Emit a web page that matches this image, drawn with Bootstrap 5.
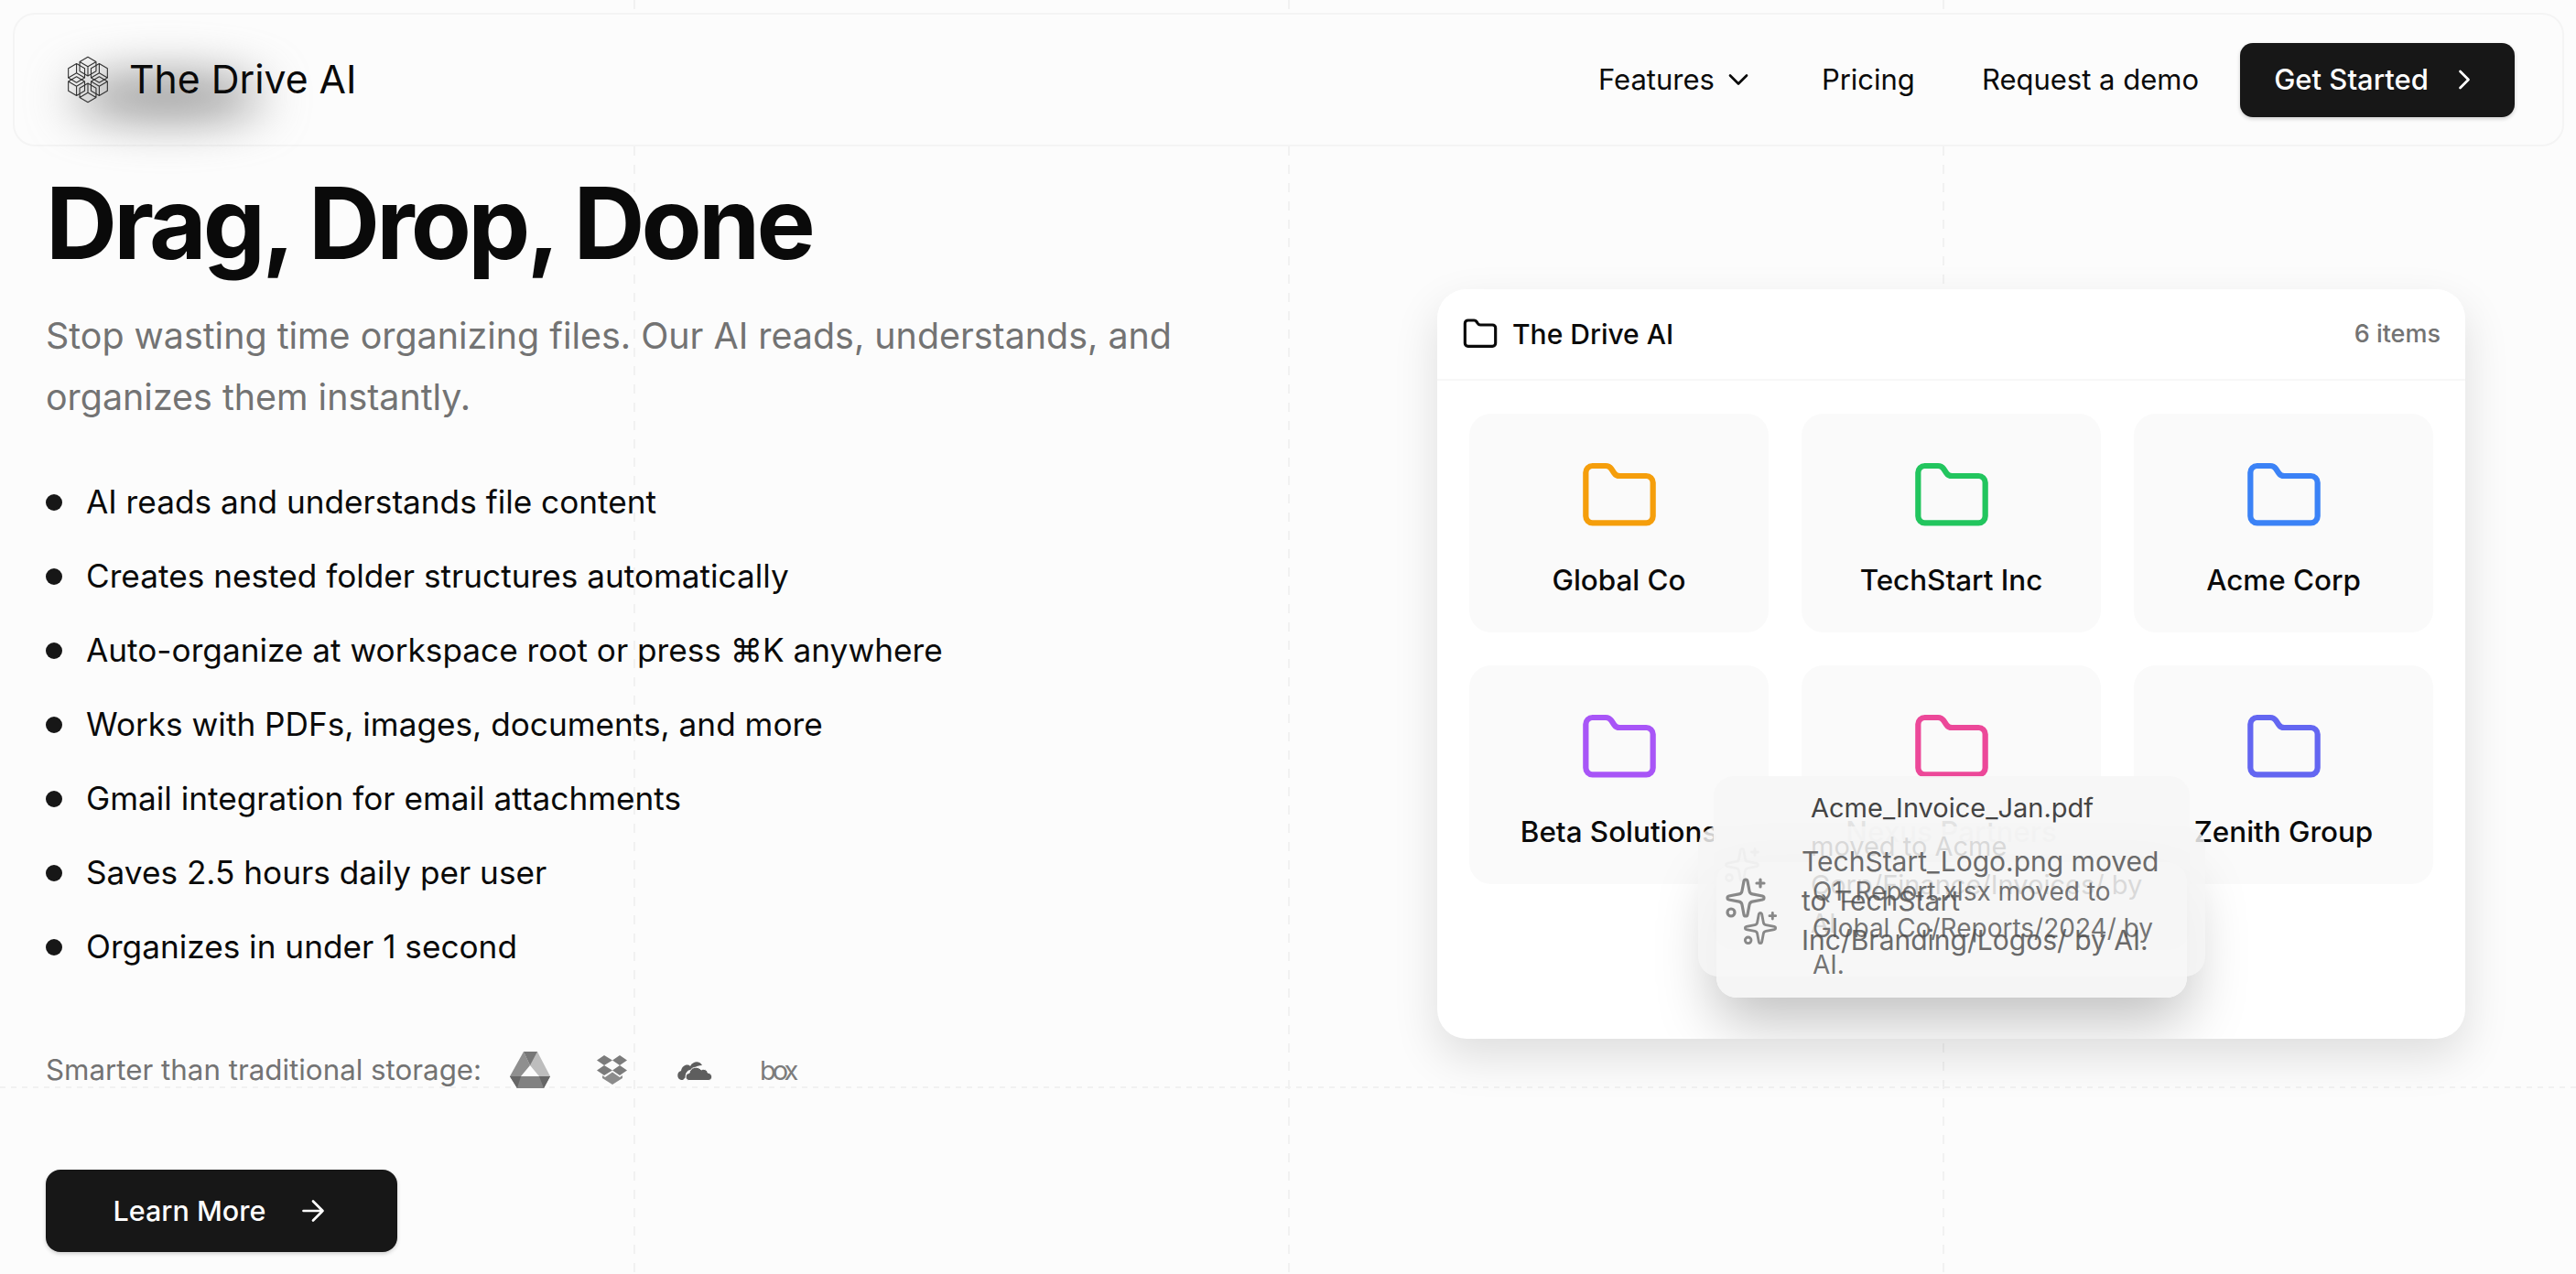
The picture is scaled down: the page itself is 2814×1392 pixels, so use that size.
<!DOCTYPE html>
<html lang="en">
<head>
  <meta charset="UTF-8" />
  <meta name="viewport" content="width=device-width, initial-scale=1.0"/>
  <title>The Drive AI</title>
  <link href="https://cdn.jsdelivr.net/npm/bootstrap@5.3.3/dist/css/bootstrap.min.css" rel="stylesheet">
  <style>
    html, body { height: 100%; }
    body {
      font-family: "Inter", "Liberation Sans", sans-serif;
      color: #0a0a0a;
      overflow: hidden;
      background-color: #fcfcfc;
      background-image:
        repeating-linear-gradient(to bottom, #f1f1f1 0 10px, transparent 10px 20px),
        repeating-linear-gradient(to bottom, #f1f1f1 0 10px, transparent 10px 20px),
        repeating-linear-gradient(to bottom, #f1f1f1 0 10px, transparent 10px 20px),
        repeating-linear-gradient(to right, #f1f1f1 0 6px, transparent 6px 12px);
      background-size: 2px 100%, 2px 100%, 2px 100%, 100% 2px;
      background-position: 692px 0, 1407px 0, 2122px 0, 0 1187px;
      background-repeat: no-repeat;
    }

    .top-bar {
      margin: 14px 13px 0 14px;
      height: 146px;
      padding: 0 52px 0 52px;
      background: #fcfcfc;
      border: 2px solid #f4f4f4;
      border-radius: 24px;
      position: relative;
    }
    .brand-blob {
      position: absolute;
      left: 62px;
      top: 68px;
      width: 210px;
      height: 44px;
      background: #8a8a8a;
      border-radius: 50%;
      filter: blur(26px);
    }
    .brand-link { position: relative; font-size: 42.7px; color: #0a0a0a; gap: 17px; padding: 0; margin: 0; }
    .brand-link:hover { color: #0a0a0a; }
    .top-link { font-size: 31px; color: #0a0a0a !important; padding: 0 !important; margin-right: 73px; }
    .top-link.last-link { margin-right: 45px; }
    .dark-btn {
      background: #171717;
      color: #fff;
      border: 0;
      font-weight: 500;
      box-shadow: 0 2px 4px rgba(0,0,0,.18);
    }
    .dark-btn:hover { background: #171717; color: #fff; }
    .start-btn { width: 300px; height: 81px; font-size: 31px; border-radius: 14px; gap: 21px; }
    .learn-btn { width: 384px; height: 90px; font-size: 30.5px; border-radius: 16px; gap: 34px; }

    .hero-left { padding: 19px 0 0 50px; }
    .hero-title { font-size: 108px; font-weight: 700; letter-spacing: -.035em; line-height: 130px; margin: 0 0 25px; color: #0a0a0a; }
    .hero-sub { font-size: 39.4px; line-height: 67px; color: #737373; margin: 0 0 40px; }
    .point-list { font-size: 35.2px; margin: 0 0 69px; }
    .point-list li { height: 81px; gap: 26px; color: #0a0a0a; }
    .point-dot { width: 18px; height: 18px; border-radius: 50%; background: #171717; flex: none; }
    .store-row { font-size: 31.3px; color: #737373; height: 50px; margin-bottom: 84px; }
    .store-icon { width: 90px; flex: none; }
    .box-word { font-size: 29px; letter-spacing: -4px; color: #7c7c7c; width: 90px; line-height: 1; }

    .drive-card {
      position: relative;
      width: 1123px;
      height: 819px;
      margin: 156px 0 0 163px;
      border: 0;
      border-radius: 32px;
      box-shadow: 0 20px 50px rgba(0,0,0,.12);
    }
    .drive-head { height: 100px; padding: 0 27px; background: #fff; border-bottom: 2px solid #f7f7f7; border-radius: 32px 32px 0 0 !important; }
    .drive-head-title { font-size: 30px; font-weight: 500; gap: 15px; }
    .drive-count { font-size: 27px; color: #737373; font-weight: 500; }
    .tile-grid { display: grid; grid-template-columns: repeat(3, 1fr); gap: 36px; padding: 36px 35px; }
    .folder-tile { height: 239px; background: #fafafa; border-radius: 24px; padding-top: 46px; }
    .folder-tile span { font-size: 31.4px; font-weight: 500; margin-top: 25px; }

    .toast-note {
      position: absolute;
      border-radius: 22px;
    }
    .toast-note svg { position: absolute; stroke: #888; }
    .note-a { left: 302px; top: 532px; width: 520px; height: 190px; font-size: 29px; line-height: 42px; padding: 14px 40px 0 106px; color: #444; background: rgba(246,246,246,.92); z-index: 1; }
    .note-shade { left: 305px; top: 626px; width: 514px; height: 148px; box-shadow: 0 24px 64px rgba(0,0,0,.26); z-index: 2; }
    .note-c { left: 285px; top: 587px; width: 554px; height: 164px; font-size: 30px; line-height: 43px; padding: 17px 24px 0 113px; color: #6a6a6a; background: rgba(246,246,246,.84); z-index: 3; }
    .note-b { left: 305px; top: 626px; width: 514px; height: 148px; font-size: 28px; line-height: 40px; padding: 12px 20px 0 105px; color: rgba(80,80,80,.8); background: linear-gradient(to bottom, transparent 125px, #f5f5f5 125px); z-index: 4; }
    .note-a svg { left: 10px; top: 76px; }
    .note-c svg { left: 28px; top: 54px; }
    .note-b svg { left: 28px; top: 52px; }
  </style>
</head>
<body>

  <svg width="0" height="0" class="position-absolute">
    <symbol id="folder" viewBox="0 0 24 24" fill="none" stroke-linecap="round" stroke-linejoin="round">
      <path d="M20 20a2 2 0 0 0 2-2V8a2 2 0 0 0-2-2h-7.9a2 2 0 0 1-1.69-.9L9.6 3.9A2 2 0 0 0 7.93 3H4a2 2 0 0 0-2 2v13a2 2 0 0 0 2 2Z"/>
    </symbol>
    <symbol id="sparkle" viewBox="0 0 24 24" fill="none" stroke-linecap="round" stroke-linejoin="round">
      <path d="M11.017 2.814a1 1 0 0 1 1.966 0l1.051 5.558a2 2 0 0 0 1.594 1.594l5.558 1.051a1 1 0 0 1 0 1.966l-5.558 1.051a2 2 0 0 0-1.594 1.594l-1.051 5.558a1 1 0 0 1-1.966 0l-1.051-5.558a2 2 0 0 0-1.594-1.594l-5.558-1.051a1 1 0 0 1 0-1.966l5.558-1.051a2 2 0 0 0 1.594-1.594z"/>
      <path d="M20 2v4M22 4h-4"/>
      <circle cx="4" cy="20" r="2"/>
    </symbol>
    <g id="cube" fill="none" stroke="#333" stroke-width="1" stroke-linejoin="round">
      <path d="M0-22l8 4.6v9.2l-8 4.6-8-4.6v-9.2zM-8-17.400l8 4.600 8-4.600M0-12.800v9.200"/>
    </g>
  </svg>

  <!-- Navbar -->
  <nav class="navbar top-bar d-flex justify-content-between align-items-center flex-nowrap">
    <div class="brand-blob"></div>
    <a class="navbar-brand brand-link d-flex align-items-center" href="#">
      <svg width="56" height="56" viewBox="-25 -25 50 50">
        <use href="#cube"/>
        <use href="#cube" transform="rotate(60)"/>
        <use href="#cube" transform="rotate(120)"/>
        <use href="#cube" transform="rotate(180)"/>
        <use href="#cube" transform="rotate(240)"/>
        <use href="#cube" transform="rotate(300)"/>
      </svg>
      The Drive AI
    </a>
    <div class="d-flex align-items-center">
      <a class="nav-link top-link d-flex align-items-center" href="#">Features
        <svg class="ms-2" width="36" height="36" viewBox="0 0 24 24" fill="none" stroke="#0a0a0a" stroke-width="1.8" stroke-linecap="round" stroke-linejoin="round"><path d="m6 9 6 6 6-6"/></svg>
      </a>
      <a class="nav-link top-link" href="#">Pricing</a>
      <a class="nav-link top-link last-link" href="#">Request a demo</a>
      <a class="btn dark-btn start-btn d-flex align-items-center justify-content-center" href="#">Get Started
        <svg width="36" height="36" viewBox="0 0 24 24" fill="none" stroke="#fff" stroke-width="1.8" stroke-linecap="round" stroke-linejoin="round"><path d="m9 18 6-6-6-6"/></svg>
      </a>
    </div>
  </nav>

  <div class="container-fluid p-0">
    <div class="row g-0">
      <!-- Hero text -->
      <div class="col-6 hero-left">
        <h1 class="hero-title">Drag, Drop, Done</h1>
        <p class="hero-sub">Stop wasting time organizing files. Our AI reads, understands, and organizes them instantly.</p>
        <ul class="list-unstyled point-list">
          <li class="d-flex align-items-center"><span class="point-dot"></span>AI reads and understands file content</li>
          <li class="d-flex align-items-center"><span class="point-dot"></span>Creates nested folder structures automatically</li>
          <li class="d-flex align-items-center"><span class="point-dot"></span>Auto-organize at workspace root or press ⌘K anywhere</li>
          <li class="d-flex align-items-center"><span class="point-dot"></span>Works with PDFs, images, documents, and more</li>
          <li class="d-flex align-items-center"><span class="point-dot"></span>Gmail integration for email attachments</li>
          <li class="d-flex align-items-center"><span class="point-dot"></span>Saves 2.5 hours daily per user</li>
          <li class="d-flex align-items-center"><span class="point-dot"></span>Organizes in under 1 second</li>
        </ul>
        <div class="d-flex align-items-center store-row">
          <span class="me-2">Smarter than traditional storage:</span>
          <svg class="store-icon" height="40" viewBox="-23 0 90 40">
            <path d="M15 0 22 15 12 27 8 40 0 27Z" fill="#8f8f8f"/>
            <path d="M22 15 15 0H30L44 27H32Z" fill="#bdbdbd"/>
            <path d="M15 0H30L22 15Z" fill="#777"/>
            <path d="M0 27H44L37 40H8Z" fill="#828282"/>
            <path d="M0 27H12L8 40ZM32 27H44L37 40Z" fill="#666"/>
          </svg>
          <svg class="store-icon" height="33" viewBox="-28 0 90 33">
            <path d="M8 0l9 5.500-9 5.500-8-5.500zM25 0l8 5.500-8 5.500-8-5.500zM8 11l9 5.500-9 5.500-8-5.500zM25 11l8 5.500-8 5.500-8-5.500z" fill="#7c7c7c"/>
            <path d="M17 18.500l8 5.500 3-2v3l-11 7-11-7v-3l3 2z" fill="#8c8c8c"/>
          </svg>
          <svg class="store-icon" height="24" viewBox="-26 0 90 24">
            <path d="M6 23H4C-1 22-1 14 4 13 5 7 11 5 14 8 17 2 25 2 27 7 22 7 18 10 17 12 12 11 8 15 9 20Z" fill="#5e5e5e"/>
            <path d="M12 23.500C8 22 8 16 13 15.500 14 9 22 7 26 12 30 10 33 13 33 15 39 16 39 23 34 23.500Z" fill="#5e5e5e" stroke="#fcfcfc"/>
          </svg>
          <span class="box-word text-center">box</span>
        </div>
        <a class="btn dark-btn learn-btn d-inline-flex align-items-center justify-content-center" href="#">Learn More
          <svg width="36" height="36" viewBox="0 0 24 24" fill="none" stroke="#fff" stroke-width="1.8" stroke-linecap="round" stroke-linejoin="round"><path d="M5 12h14M12 5l7 7-7 7"/></svg>
        </a>
      </div>

      <!-- Drive mock -->
      <div class="col-6">
        <div class="card drive-card overflow-hidden">
          <div class="card-header drive-head d-flex align-items-center justify-content-between">
            <div class="d-flex align-items-center drive-head-title">
              <svg width="40" height="40" stroke="#0a0a0a" stroke-width="1.9"><use href="#folder"/></svg>
              The Drive AI
            </div>
            <span class="drive-count">6 items</span>
          </div>
          <div class="tile-grid">
            <div class="folder-tile d-flex flex-column align-items-center"><svg width="88" height="88" stroke="#f59e0b" stroke-width="1.7"><use href="#folder"/></svg><span>Global Co</span></div>
            <div class="folder-tile d-flex flex-column align-items-center"><svg width="88" height="88" stroke="#22c55e" stroke-width="1.7"><use href="#folder"/></svg><span>TechStart Inc</span></div>
            <div class="folder-tile d-flex flex-column align-items-center"><svg width="88" height="88" stroke="#3b82f6" stroke-width="1.7"><use href="#folder"/></svg><span>Acme Corp</span></div>
            <div class="folder-tile d-flex flex-column align-items-center"><svg width="88" height="88" stroke="#a855f7" stroke-width="1.7"><use href="#folder"/></svg><span>Beta Solutions</span></div>
            <div class="folder-tile d-flex flex-column align-items-center"><svg width="88" height="88" stroke="#ec4899" stroke-width="1.7"><use href="#folder"/></svg><span>Nexus Partners</span></div>
            <div class="folder-tile d-flex flex-column align-items-center"><svg width="88" height="88" stroke="#6366f1" stroke-width="1.7"><use href="#folder"/></svg><span>Zenith Group</span></div>
          </div>

          <!-- Stacked notifications -->
          <div class="toast-note note-a">
            <svg width="42" height="42" stroke-width="1.6" opacity=".35"><use href="#sparkle"/></svg>
            Acme_Invoice_Jan.pdf moved to Acme Corp/Finance/Invoices/ by AI.
          </div>
          <div class="toast-note note-shade"></div>
          <div class="toast-note note-c">
            <svg width="48" height="48" stroke-width="1.6"><use href="#sparkle"/></svg>
            TechStart_Logo.png moved to TechStart Inc/Branding/Logos/ by AI.
          </div>
          <div class="toast-note note-b">
            <svg width="40" height="40" stroke-width="1.7"><use href="#sparkle"/></svg>
            Q1_Report.xlsx moved to Global Co/Reports/2024/ by AI.
          </div>
        </div>
      </div>
    </div>
  </div>

  <script src="https://cdn.jsdelivr.net/npm/bootstrap@5.3.3/dist/js/bootstrap.bundle.min.js"></script>
</body>
</html>
